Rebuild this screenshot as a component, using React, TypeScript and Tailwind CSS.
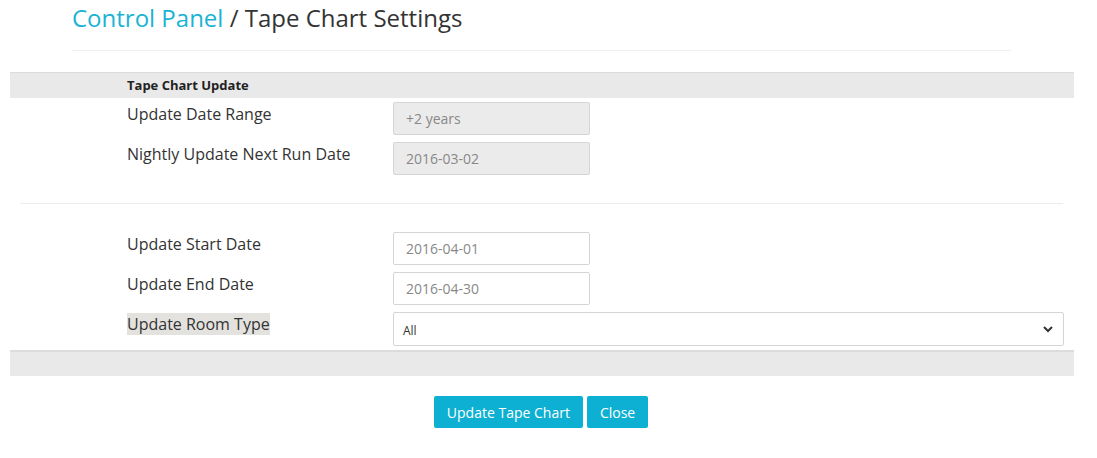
export default function App() {
  return (
    <div className="min-h-[458px] w-[1097px] bg-white font-['Open_Sans',sans-serif] text-[#333]">
      <div className="px-[72px] pr-[86px]">
        <h1 className="pt-[3px] pb-[17px] text-[24px] leading-[30px] font-normal text-[#333]">
          <span className="text-[#1ab3d4]">Control Panel</span> / Tape Chart Settings
        </h1>
        <div className="h-px bg-[#eeeeee]" />
      </div>

      <div className="mx-[10px] mr-[23px] mt-[21px]">
        <div className="h-[26px] border-t border-[#dcdcdc] bg-[#e9e9e9] pl-[117px] text-[13px] leading-[25px] font-bold text-[#222]">
          Tape Chart Update
        </div>

        <div className="flex flex-col gap-[7px] pt-[4px]">
          <Row label="Update Date Range">
            <input readOnly value="+2 years" className="h-[33px] w-[197px] rounded-[2px] border border-[#d5d5d5] bg-[#ebebeb] px-[12px] text-[14px] text-[#888] outline-none" />
          </Row>
          <Row label="Nightly Update Next Run Date">
            <input readOnly value="2016-03-02" className="h-[33px] w-[197px] rounded-[2px] border border-[#d5d5d5] bg-[#ebebeb] px-[12px] text-[14px] text-[#888] outline-none" />
          </Row>
        </div>

        <div className="mx-[10px] mr-[11px] mt-[28px] h-px bg-[#ebebeb]" />

        <div className="flex flex-col gap-[7px] pt-[28px]">
          <Row label="Update Start Date">
            <input readOnly value="2016-04-01" className="h-[33px] w-[197px] rounded-[2px] border border-[#d5d5d5] bg-white px-[12px] text-[14px] text-[#888] outline-none" />
          </Row>
          <Row label="Update End Date">
            <input readOnly value="2016-04-30" className="h-[33px] w-[197px] rounded-[2px] border border-[#d5d5d5] bg-white px-[12px] text-[14px] text-[#888] outline-none" />
          </Row>
          <Row label="Update Room Type" highlight>
            <div className="flex h-[34px] w-[671px] items-center justify-between rounded-[2px] border border-[#d5d5d5] bg-white pr-[9px] pl-[9px]">
              <span className="pt-[3px] text-[12px] text-[#333]">All</span>
              <svg width="12" height="12" viewBox="0 0 12 12" fill="none">
                <path d="M2 4l4 4 4-4" stroke="#333" strokeWidth="2" />
              </svg>
            </div>
          </Row>
        </div>

        <div className="mt-[4px] h-[26px] border-t-2 border-[#dcdcdc] bg-[#e9e9e9]" />
      </div>

      <div className="flex justify-center gap-[4px] pt-[20px] pr-[15px]">
        <button className="h-[32px] rounded-[2px] bg-[#0db0d2] px-[13px] text-[14px] text-white">
          Update Tape Chart
        </button>
        <button className="h-[32px] rounded-[2px] bg-[#0db0d2] px-[13px] text-[14px] text-white">
          Close
        </button>
      </div>
    </div>
  );
}

function Row({
  label,
  highlight,
  children,
}: {
  label: string;
  highlight?: boolean;
  children: React.ReactNode;
}) {
  return (
    <div className="flex items-start">
      <div className="w-[383px] shrink-0 pl-[117px]">
        <span className={`text-[16px] leading-[20px] ${highlight ? "bg-[#e4e2df]" : ""}`}>{label}</span>
      </div>
      {children}
    </div>
  );
}
